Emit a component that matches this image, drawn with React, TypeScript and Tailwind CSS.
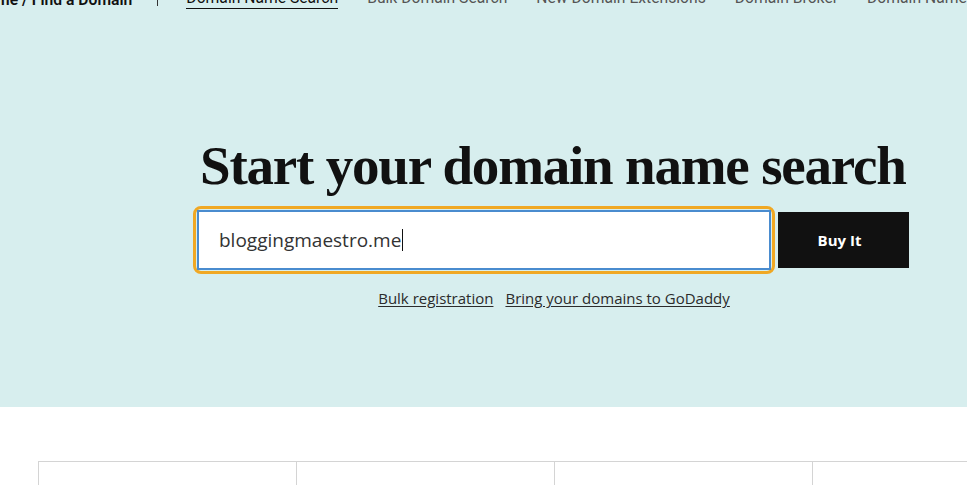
import React from 'react'

const navLinks = [
  'Domain Name Search',
  'Bulk Domain Search',
  'New Domain Extensions',
  'Domain Broker',
  'Domain Name Generator',
]

const App = () => {
  return (
    <div className="w-[967px] h-[485px] overflow-hidden bg-white font-['Liberation_Sans',sans-serif]">
      <div className="bg-[#d7eeee] h-[407px] flex flex-col">
        {/* breadcrumb + sub nav, scrolled partly out of view */}
        <div className="h-[10px] flex items-end whitespace-nowrap text-[15.7px] leading-[18px] -mt-[1px] font-['Roboto',sans-serif]">
          <div className="flex items-end -ml-[4px]">
            <span className="text-[#111] font-semibold">me / Find a Domain</span>
            <span className="ml-[25px] mb-[3px] w-px h-[18px] bg-[#333]" />
          </div>
          <div className="flex items-end ml-[28px] gap-[29px]">
            {navLinks.map((label, i) => (
              <span
                key={label}
                className={
                  i === 0
                    ? 'text-[#111] border-b-[1.5px] border-[#111] pb-[1px]'
                    : 'text-[#555] pb-[2px]'
                }
              >
                {label}
              </span>
            ))}
          </div>
        </div>

        <div className="pl-[193px] pt-[125px]">
          <div className="w-[716px] flex flex-col">
            <h1 className="pl-[7px] text-[55px] leading-[64px] font-bold tracking-[-1.2px] text-[#111] font-['Liberation_Serif',serif]">
              Start your domain name search
            </h1>
            <div className="mt-[8px] flex items-center">
              <div className="w-[582px] h-[68px] rounded-[8px] border-[3px] border-[#f0a824] p-px">
                <div className="h-full bg-white border-[2px] border-[#4a8ccf] flex items-center pl-[20px]">
                  <span className="text-[19px] text-[#333] font-['Open_Sans',sans-serif]">bloggingmaestro.me</span>
                  <span className="w-px h-[22px] bg-[#111] ml-[1px]" />
                </div>
              </div>
              <button className="ml-[3px] w-[131px] h-[56px] pr-[8px] bg-[#111] text-white text-[15px] font-bold font-['Open_Sans',sans-serif]">
                Buy It
              </button>
            </div>
            <div className="mt-[13px] flex justify-center gap-[12px] pl-[6px] text-[15px] text-[#2b2b2b] font-['Open_Sans',sans-serif]">
              <a className="underline underline-offset-2">Bulk registration</a>
              <a className="underline underline-offset-2">Bring your domains to GoDaddy</a>
            </div>
          </div>
        </div>
      </div>

      <div className="pt-[54px] pl-[38px] flex">
        {[0, 1, 2, 3].map((i) => (
          <div
            key={i}
            className="w-[258px] h-[40px] border-t border-l border-[#d4d4d4] shrink-0"
          />
        ))}
      </div>
    </div>
  )
}

export default App
